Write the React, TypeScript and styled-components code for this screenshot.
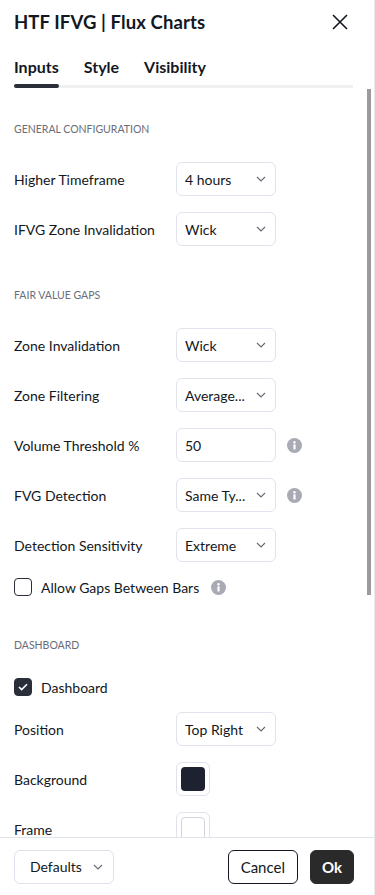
import styled, { createGlobalStyle } from "styled-components"

const GlobalStyle = createGlobalStyle`
  html, body {
    margin: 0;
    padding: 0;
    background: #ffffff;
  }
  body {
    font-family: Lato, "Liberation Sans", sans-serif;
    color: #131722;
  }
  * {
    box-sizing: border-box;
  }
`

const Dialog = styled.div`
  position: relative;
  width: 375px;
  height: 895px;
  display: flex;
  flex-direction: column;
  border-right: 1px solid #e9e9ec;
  overflow: hidden;
`

const Header = styled.div`
  height: 44px;
  display: flex;
  align-items: center;
  justify-content: space-between;
  padding: 0 24px 0 14px;

  h1 {
    margin: 0;
    font-size: 18.5px;
    font-weight: 700;
    letter-spacing: 0.1px;
  }
`

const CloseBtn = styled.button`
  background: none;
  border: none;
  padding: 0;
  width: 20px;
  height: 20px;
  display: flex;
  align-items: center;
  justify-content: center;
  color: #131722;
  cursor: pointer;
`

const Tabs = styled.div`
  display: flex;
  gap: 25px;
  margin: 13px 21px 0 14px;
  border-bottom: 3px solid #f0f0f0;
`

const Tab = styled.div<{ $active?: boolean }>`
  position: relative;
  font-size: 16px;
  font-weight: 700;
  line-height: 20px;
  padding-bottom: 8px;
  color: #131722;

  &::after {
    content: "";
    display: ${p => (p.$active ? "block" : "none")};
    position: absolute;
    left: 0;
    right: 0;
    bottom: -3px;
    height: 4px;
    border-radius: 2px;
    background: #2a2e39;
  }
`

const Body = styled.div`
  flex: 1;
  overflow: hidden;
  padding: 0 14px;
`

const Scrollbar = styled.div`
  position: absolute;
  top: 89px;
  right: 3px;
  width: 4px;
  height: 506px;
  background: #9b9b9b;
`

const SectionTitle = styled.div`
  margin: 33px 0 17px;
  height: 16px;
  line-height: 16px;
  font-size: 10.5px;
  color: #6a6d78;
  text-transform: uppercase;
`

const Row = styled.div`
  display: flex;
  align-items: center;
  height: 50px;
`

const Label = styled.div`
  width: 162px;
  font-size: 14px;
`

const Select = styled.div`
  width: 100px;
  height: 34px;
  border: 1px solid #e0e3eb;
  border-radius: 6px;
  display: flex;
  align-items: center;
  justify-content: space-between;
  padding: 0 9px 0 8px;
  font-size: 14px;
  white-space: nowrap;
`

const Chevron = styled.svg`
  flex-shrink: 0;
  color: #6a6d78;
`

const Input = styled.div`
  width: 100px;
  height: 34px;
  border: 1px solid #e0e3eb;
  border-radius: 6px;
  display: flex;
  align-items: center;
  padding: 0 8px;
  font-size: 14px;
`

const Swatch = styled.div`
  width: 34px;
  height: 34px;
  border: 1px solid #e0e3eb;
  border-radius: 6px;
  display: flex;
  align-items: center;
  justify-content: center;
`

const SwatchFill = styled.div<{ $color: string }>`
  width: 24px;
  height: 24px;
  border-radius: 4px;
  background: ${p => p.$color};
  border: ${p => (p.$color === "#ffffff" ? "1px solid #d1d4dc" : "none")};
`

const CheckRow = styled.div`
  display: flex;
  align-items: center;
  height: 34px;
  gap: 9px;
  font-size: 14px;
`

const Box = styled.div<{ $checked?: boolean }>`
  width: 18px;
  height: 18px;
  border-radius: 4px;
  border: 1.5px solid #2a2e39;
  background: ${p => (p.$checked ? "#2a2e39" : "#ffffff")};
  display: flex;
  align-items: center;
  justify-content: center;
`

const InfoWrap = styled.span<{ $gap: number }>`
  display: inline-flex;
  margin-left: ${p => p.$gap}px;
`

const Footer = styled.div`
  height: 58px;
  flex-shrink: 0;
  border-top: 1px solid #e0e3eb;
  display: flex;
  align-items: center;
  padding: 0 20px 0 14px;
  gap: 12px;
`

const DefaultsBtn = styled.div`
  width: 100px;
  height: 34px;
  border: 1px solid #e0e3eb;
  border-radius: 6px;
  display: flex;
  align-items: center;
  justify-content: space-between;
  padding: 0 10px 0 15px;
  font-size: 14px;
  margin-right: auto;
`

const FooterBtn = styled.button<{ $primary?: boolean }>`
  height: 34px;
  padding: 0 ${p => (p.$primary ? 11 : 12)}px;
  border-radius: 6px;
  font-family: inherit;
  font-size: 15px;
  font-weight: ${p => (p.$primary ? 700 : 400)};
  border: 1px solid ${p => (p.$primary ? "#2a2a2a" : "#131722")};
  background: ${p => (p.$primary ? "#2a2a2a" : "#ffffff")};
  color: ${p => (p.$primary ? "#ffffff" : "#131722")};
`

function ChevronIcon() {
  return (
    <Chevron width="10" height="6" viewBox="0 0 10 6">
      <path d="M1 1l4 4 4-4" fill="none" stroke="currentColor" strokeWidth="1.2" />
    </Chevron>
  )
}

function InfoIcon() {
  return (
    <svg width="15" height="15" viewBox="0 0 15 15">
      <circle cx="7.5" cy="7.5" r="7.5" fill="#a8abb3" />
      <circle cx="7.5" cy="4.3" r="1.2" fill="#fff" />
      <rect x="6.4" y="6.2" width="2.2" height="5.4" rx="0.6" fill="#fff" />
    </svg>
  )
}

function SelectField({ value }: { value: string }) {
  return (
    <Select>
      <span>{value}</span>
      <ChevronIcon />
    </Select>
  )
}

export default function App() {
  return (
    <Dialog>
      <GlobalStyle />
      <Header>
        <h1>HTF IFVG | Flux Charts</h1>
        <CloseBtn aria-label="Close">
          <svg width="18" height="18" viewBox="0 0 18 18">
            <path d="M2 2l14 14M16 2L2 16" stroke="currentColor" strokeWidth="1.6" fill="none" />
          </svg>
        </CloseBtn>
      </Header>
      <Tabs>
        <Tab $active>Inputs</Tab>
        <Tab>Style</Tab>
        <Tab>Visibility</Tab>
      </Tabs>
      <Body>
        <SectionTitle>General Configuration</SectionTitle>
        <Row>
          <Label>Higher Timeframe</Label>
          <SelectField value="4 hours" />
        </Row>
        <Row>
          <Label>IFVG Zone Invalidation</Label>
          <SelectField value="Wick" />
        </Row>

        <SectionTitle>Fair Value Gaps</SectionTitle>
        <Row>
          <Label>Zone Invalidation</Label>
          <SelectField value="Wick" />
        </Row>
        <Row>
          <Label>Zone Filtering</Label>
          <SelectField value="Average..." />
        </Row>
        <Row>
          <Label>Volume Threshold %</Label>
          <Input>50</Input>
          <InfoWrap $gap={11}><InfoIcon /></InfoWrap>
        </Row>
        <Row>
          <Label>FVG Detection</Label>
          <SelectField value="Same Ty..." />
          <InfoWrap $gap={11}><InfoIcon /></InfoWrap>
        </Row>
        <Row>
          <Label>Detection Sensitivity</Label>
          <SelectField value="Extreme" />
        </Row>
        <CheckRow>
          <Box />
          <span>Allow Gaps Between Bars</span>
          <InfoWrap $gap={3}><InfoIcon /></InfoWrap>
        </CheckRow>

        <SectionTitle>Dashboard</SectionTitle>
        <CheckRow>
          <Box $checked>
            <svg width="10" height="8" viewBox="0 0 10 8">
              <path d="M1 4l2.6 2.6L9 1.2" fill="none" stroke="#fff" strokeWidth="1.6" />
            </svg>
          </Box>
          <span>Dashboard</span>
        </CheckRow>
        <Row>
          <Label>Position</Label>
          <SelectField value="Top Right" />
        </Row>
        <Row>
          <Label>Background</Label>
          <Swatch><SwatchFill $color="#1e2130" /></Swatch>
        </Row>
        <Row>
          <Label>Frame</Label>
          <Swatch><SwatchFill $color="#ffffff" /></Swatch>
        </Row>
      </Body>
      <Scrollbar />
      <Footer>
        <DefaultsBtn>
          <span>Defaults</span>
          <ChevronIcon />
        </DefaultsBtn>
        <FooterBtn>Cancel</FooterBtn>
        <FooterBtn $primary>Ok</FooterBtn>
      </Footer>
    </Dialog>
  )
}
